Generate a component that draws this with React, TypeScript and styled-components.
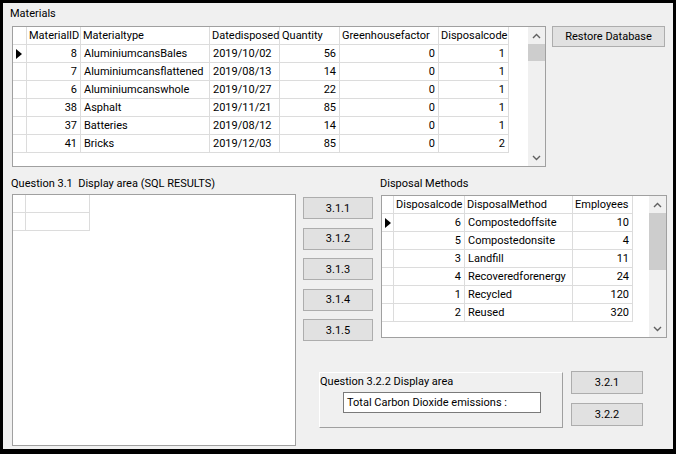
import React from "react";
import styled, { createGlobalStyle } from "styled-components";

const GlobalStyle = createGlobalStyle`
  html, body {
    margin: 0;
    padding: 0;
    background: #000;
  }
  * { box-sizing: border-box; }
`;

const FONT = `Roboto, "Liberation Sans", Arial, sans-serif`;

const Screen = styled.div`
  width: 676px;
  height: 454px;
  padding: 3px 3px 5px 3px;
  background: #000;
`;

const Form = styled.div`
  width: 670px;
  height: 446px;
  background: #f0f0f0;
  display: flex;
  flex-direction: column;
  padding-top: 4px;
  font-family: ${FONT};
  font-size: 11px;
  color: #000;
`;

const Caption = styled.div<{ $indent?: number }>`
  height: 13px;
  line-height: 13px;
  white-space: nowrap;
  margin-left: ${(p) => p.$indent ?? 0}px;
`;

const TopRow = styled.div`
  display: flex;
  align-items: flex-start;
  gap: 6px;
  margin-top: 6px;
  padding-left: 9px;
`;

const BottomRow = styled.div`
  display: flex;
  align-items: flex-start;
  margin-top: 10px;
  padding-left: 8px;
`;

const Column = styled.div`
  display: flex;
  flex-direction: column;
  align-items: flex-start;
`;

const RightArea = styled.div`
  display: flex;
  flex-direction: column;
  margin-left: 7px;
`;

const UpperRow = styled.div`
  display: flex;
  align-items: flex-start;
`;

const ButtonStack = styled.div`
  display: flex;
  flex-direction: column;
  gap: 8.5px;
  padding-top: 20px;
`;

const DisposalColumn = styled(Column)`
  margin-left: 7px;
`;

const LowerRow = styled.div`
  display: flex;
  align-items: flex-start;
  margin-top: 30px;
`;

const SideButtons = styled.div`
  display: flex;
  flex-direction: column;
  gap: 9px;
  margin-left: 8px;
`;

const WinButton = styled.button<{ $w: number; $h: number }>`
  width: ${(p) => p.$w}px;
  height: ${(p) => p.$h}px;
  background: #e1e1e1;
  border: 1px solid #adadad;
  border-radius: 0;
  padding: 0;
  margin: 0;
  font-family: ${FONT};
  font-size: 11px;
  color: #000;
  line-height: 1;
`;

const Panel = styled.div`
  width: 244px;
  height: 56px;
  margin-left: 16px;
  margin-top: 1px;
  border-top: 1px solid #ffffff;
  border-left: 1px solid #ffffff;
  border-right: 1px solid #a0a0a0;
  border-bottom: 1px solid #a0a0a0;
  padding-top: 2px;
  display: flex;
  flex-direction: column;
  align-items: flex-start;
`;

const TextBox = styled.div`
  width: 198px;
  height: 21px;
  margin-left: 23px;
  margin-top: 4px;
  background: #fff;
  border: 1px solid #7a7a7a;
  padding-left: 3px;
  line-height: 19px;
  white-space: nowrap;
`;

/* ---------- Data grid ---------- */

const GridFrame = styled.div<{ $w: number; $h: number; $ml?: number; $mt?: number }>`
  width: ${(p) => p.$w}px;
  height: ${(p) => p.$h}px;
  margin-left: ${(p) => p.$ml ?? 0}px;
  margin-top: ${(p) => p.$mt ?? 0}px;
  border: 1px solid #a0a0a0;
  background: #fff;
  display: flex;
  overflow: hidden;
`;

const GridBody = styled.div`
  flex: 1;
  display: flex;
  flex-direction: column;
  overflow: hidden;
`;

const GridRow = styled.div`
  display: flex;
  height: 18px;
  flex: none;
`;

const Cell = styled.div<{ $w: number; $align?: "left" | "right"; $header?: boolean }>`
  width: ${(p) => p.$w}px;
  flex: none;
  height: 18px;
  border-right: 1px solid #dcdcdc;
  border-bottom: 1px solid #dcdcdc;
  line-height: 17px;
  white-space: nowrap;
  overflow: hidden;
  text-align: ${(p) => p.$align ?? "left"};
  padding: ${(p) => (p.$header ? "0 0 0 2px" : p.$align === "right" ? "0 3px 0 0" : "0 0 0 3px")};
`;

const RowHead = styled.div<{ $w: number }>`
  width: ${(p) => p.$w}px;
  flex: none;
  height: 18px;
  border-right: 1px solid #dcdcdc;
  border-bottom: 1px solid #dcdcdc;
  display: flex;
  align-items: center;
  padding-left: 3px;
`;

const Pointer = styled.span`
  width: 0;
  height: 0;
  border-top: 5px solid transparent;
  border-bottom: 5px solid transparent;
  border-left: 6px solid #000;
`;

const ScrollBar = styled.div`
  width: 17px;
  flex: none;
  background: #f0f0f0;
  display: flex;
  flex-direction: column;
`;

const ScrollArrow = styled.div`
  height: 17px;
  flex: none;
  display: flex;
  align-items: center;
  justify-content: center;
`;

const Thumb = styled.div<{ $h: number }>`
  height: ${(p) => p.$h}px;
  flex: none;
  background: #cdcdcd;
`;

const Track = styled.div`
  flex: 1;
`;

type Col = { title: string; width: number; align?: "left" | "right" };

const Chevron = ({ up }: { up?: boolean }) => (
  <svg width="9" height="6" viewBox="0 0 9 6">
    <polyline
      points={up ? "1,5 4.5,1.5 8,5" : "1,1 4.5,4.5 8,1"}
      fill="none"
      stroke="#606060"
      strokeWidth="1.4"
    />
  </svg>
);

function DataGrid(props: {
  width: number;
  height: number;
  ml?: number;
  mt?: number;
  rowHeadWidth: number;
  columns: Col[];
  rows: (string | number)[][];
  selected?: number;
  thumb?: number;
  emptyRows?: number;
}) {
  const { columns, rows } = props;
  const empty = Array.from({ length: props.emptyRows ?? 0 });
  return (
    <GridFrame $w={props.width} $h={props.height} $ml={props.ml} $mt={props.mt}>
      <GridBody>
        <GridRow>
          <RowHead $w={props.rowHeadWidth} />
          {columns.map((c, i) => (
            <Cell key={i} $w={c.width} $header>
              {c.title}
            </Cell>
          ))}
        </GridRow>
        {rows.map((r, ri) => (
          <GridRow key={ri}>
            <RowHead $w={props.rowHeadWidth}>{props.selected === ri && <Pointer />}</RowHead>
            {columns.map((c, ci) => (
              <Cell key={ci} $w={c.width} $align={c.align}>
                {r[ci]}
              </Cell>
            ))}
          </GridRow>
        ))}
        {empty.map((_, ri) => (
          <GridRow key={"e" + ri}>
            <RowHead $w={props.rowHeadWidth} />
            {columns.map((c, ci) => (
              <Cell key={ci} $w={c.width} />
            ))}
          </GridRow>
        ))}
      </GridBody>
      {props.thumb !== undefined && (
        <ScrollBar>
          <ScrollArrow>
            <Chevron up />
          </ScrollArrow>
          <Thumb $h={props.thumb} />
          <Track />
          <ScrollArrow>
            <Chevron />
          </ScrollArrow>
        </ScrollBar>
      )}
    </GridFrame>
  );
}

const materialCols: Col[] = [
  { title: "MaterialID", width: 54, align: "right" },
  { title: "Materialtype", width: 129 },
  { title: "Datedisposed", width: 70 },
  { title: "Quantity", width: 60, align: "right" },
  { title: "Greenhousefactor", width: 99, align: "right" },
  { title: "Disposalcode", width: 70, align: "right" },
];

const materialRows = [
  [8, "AluminiumcansBales", "2019/10/02", 56, 0, 1],
  [7, "Aluminiumcansflattened", "2019/08/13", 14, 0, 1],
  [6, "Aluminiumcanswhole", "2019/10/27", 22, 0, 1],
  [38, "Asphalt", "2019/11/21", 85, 0, 1],
  [37, "Batteries", "2019/08/12", 14, 0, 1],
  [41, "Bricks", "2019/12/03", 85, 0, 2],
];

const disposalCols: Col[] = [
  { title: "Disposalcode", width: 71, align: "right" },
  { title: "DisposalMethod", width: 108 },
  { title: "Employees", width: 60, align: "right" },
];

const disposalRows = [
  [6, "Compostedoffsite", 10],
  [5, "Compostedonsite", 4],
  [3, "Landfill", 11],
  [4, "Recoveredforenergy", 24],
  [1, "Recycled", 120],
  [2, "Reused", 320],
];

const resultCols: Col[] = [{ title: "", width: 64 }];

export default function App() {
  return (
    <>
      <GlobalStyle />
      <Screen>
        <Form>
          <Caption $indent={7}>Materials</Caption>
          <TopRow>
            <DataGrid
              width={534}
              height={141}
              rowHeadWidth={14}
              columns={materialCols}
              rows={materialRows}
              selected={0}
              thumb={17}
            />
            <WinButton $w={113} $h={21}>Restore Database</WinButton>
          </TopRow>
          <BottomRow>
            <Column>
              <Caption>Question 3.1&nbsp; Display area (SQL RESULTS)</Caption>
              <DataGrid
                width={284}
                height={252}
                ml={1}
                mt={4}
                rowHeadWidth={13}
                columns={resultCols}
                rows={[]}
                emptyRows={1}
              />
            </Column>
            <RightArea>
              <UpperRow>
                <ButtonStack>
                  {["3.1.1", "3.1.2", "3.1.3", "3.1.4", "3.1.5"].map((t) => (
                    <WinButton key={t} $w={70} $h={22}>
                      {t}
                    </WinButton>
                  ))}
                </ButtonStack>
                <DisposalColumn>
                  <Caption>Disposal Methods</Caption>
                  <DataGrid
                    width={286}
                    height={143}
                    ml={1}
                    mt={5}
                    rowHeadWidth={12}
                    columns={disposalCols}
                    rows={disposalRows}
                    selected={0}
                    thumb={57}
                  />
                </DisposalColumn>
              </UpperRow>
              <LowerRow>
                <Panel>
                  <Caption>Question 3.2.2 Display area</Caption>
                  <TextBox>Total Carbon Dioxide emissions :</TextBox>
                </Panel>
                <SideButtons>
                  <WinButton $w={72} $h={23}>3.2.1</WinButton>
                  <WinButton $w={72} $h={23}>3.2.2</WinButton>
                </SideButtons>
              </LowerRow>
            </RightArea>
          </BottomRow>
        </Form>
      </Screen>
    </>
  );
}
